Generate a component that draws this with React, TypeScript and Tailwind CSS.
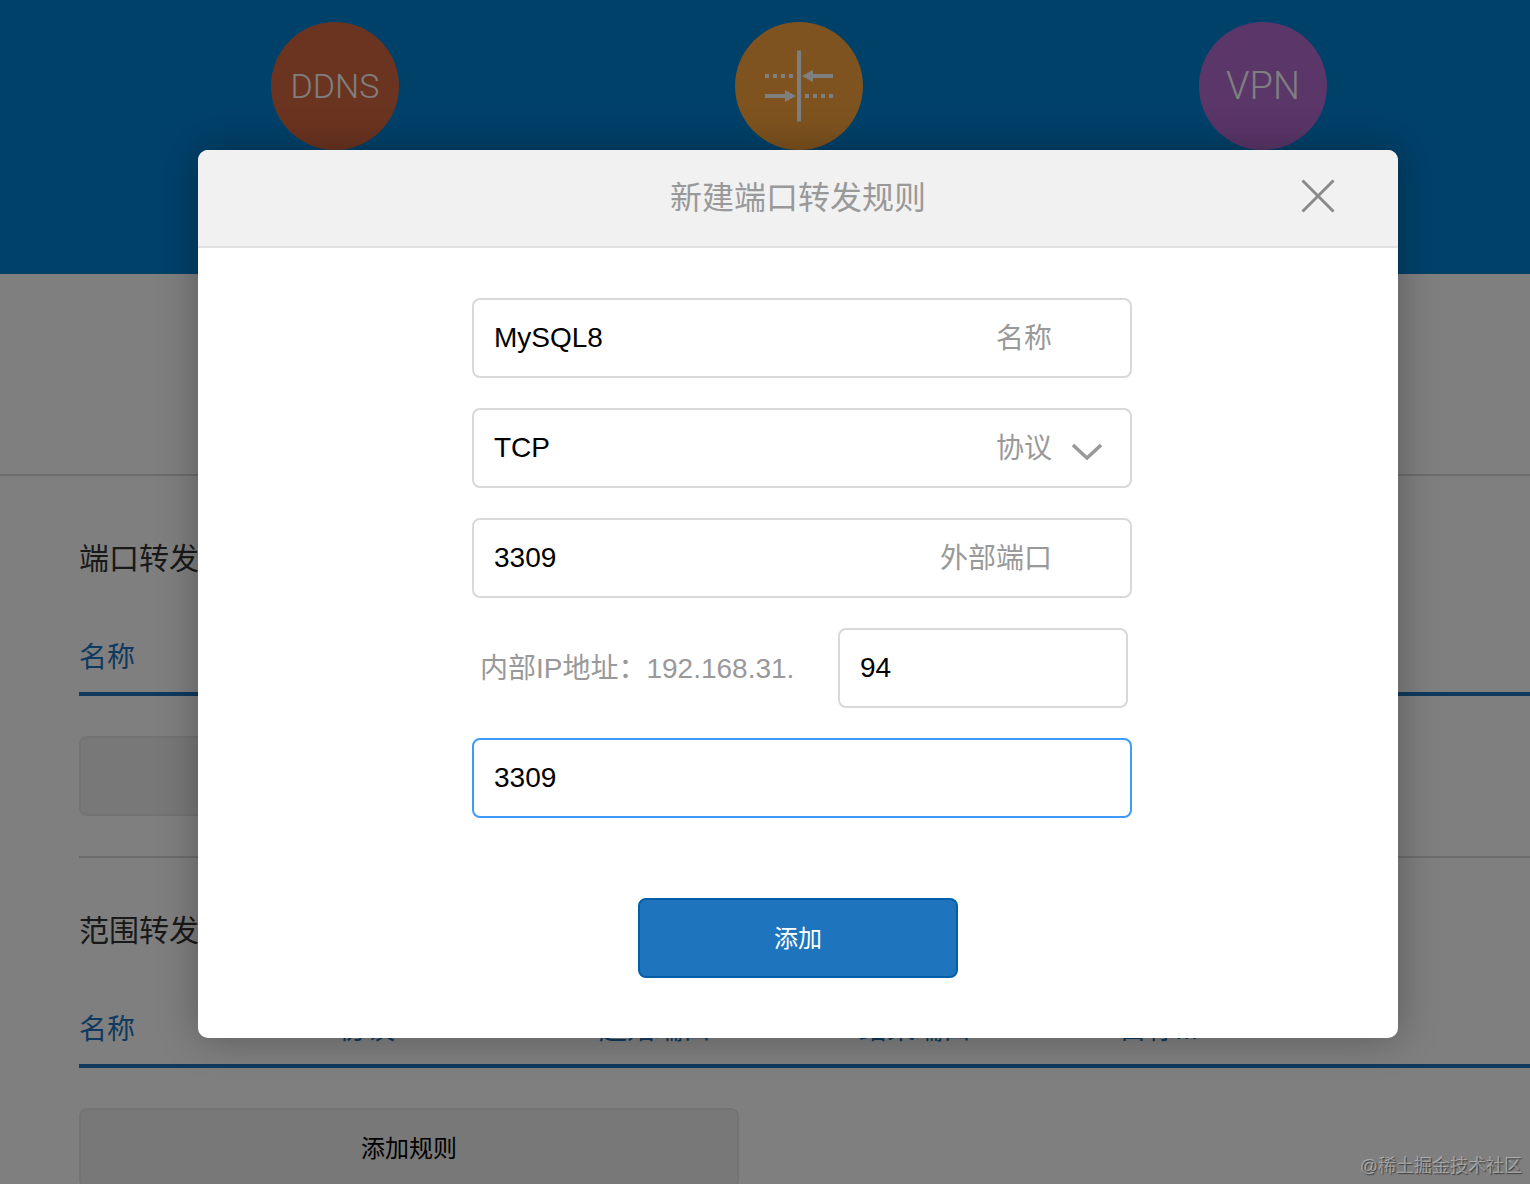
import { useState } from "react";
import type { ReactNode } from "react";

const sections = [
  {
    title: "端口转发规则列表",
    columns: ["名称", "协议"],
  },
  {
    title: "范围转发规则列表",
    columns: ["名称", "协议", "起始端口", "结束端口", "目标..."],
  },
];

const ForwardIcon = () => (
  <svg viewBox="0 0 128 128" className="w-32 h-32" fill="none" stroke="white" aria-hidden="true">
    <path d="M64 28.500V99.500" strokeWidth="4" />
    <path d="M30 54H58" strokeWidth="4" strokeDasharray="4 4" />
    <path d="M70 74H100" strokeWidth="4" strokeDasharray="4 4" />
    <path d="M76 54H98M30 74H52" strokeWidth="4" />
    <path d="M67 54L78 48V60ZM61 74L50 68V80Z" fill="white" stroke="none" />
  </svg>
);

const Badge = ({ className, children }: { className: string; children: ReactNode }) => (
  <div className={`w-32 h-32 shrink-0 rounded-full flex items-center justify-center text-white font-light font-['Roboto',sans-serif] ${className}`}>
    {children}
  </div>
);

type FieldProps = {
  id: string;
  label: string;
  value: string;
  onChange: (value: string) => void;
};

const Field = ({ id, label, value, onChange }: FieldProps) => (
  <div className="flex items-center h-20 rounded-lg border-2 border-[#d9d9d9] bg-white">
    <input
      id={id}
      value={value}
      onChange={(e) => onChange(e.target.value)}
      className="flex-1 min-w-0 h-full px-5 bg-transparent outline-none"
    />
    <label htmlFor={id} className="mr-[78px] pt-0.5 text-[#999]">
      {label}
    </label>
  </div>
);

const App = () => {
  const [name, setName] = useState("MySQL8");
  const [protocol, setProtocol] = useState("TCP");
  const [outerPort, setOuterPort] = useState("3309");
  const [ip, setIp] = useState("94");
  const [innerPort, setInnerPort] = useState("3309");

  return (
    <div className="relative h-screen overflow-hidden bg-white text-black font-['Liberation_Sans','Noto_Sans_CJK_SC',sans-serif]">
      <header className="h-[274px] pt-[22px] pl-[68px] bg-[#0082d4] flex justify-center gap-[336px]">
        <Badge className="bg-[#d66840] text-[34px]">DDNS</Badge>
        <Badge className="bg-[#fca63e]">
          <ForwardIcon />
        </Badge>
        <Badge className="bg-[#b46cd2] text-[38px]">VPN</Badge>
      </header>
      <div className="h-[202px] border-b-2 border-[#d8d8d8]" />

      <main className="pt-[10px] pl-[79px]">
        {sections.map((section) => (
          <section key={section.title} className="pt-[53px] border-b-2 border-[#d8d8d8] pb-10">
            <h2 className="text-[30px] leading-10 text-[#333]">{section.title}</h2>
            <table className="w-full mt-[59px] table-fixed border-separate border-spacing-0">
              <thead>
                <tr>
                  {section.columns.map((column) => (
                    <th
                      key={column}
                      className="w-[260px] pb-[14px] border-b-4 border-[#1e74bd] text-left text-[28px] leading-10 font-normal text-[#1e74bd]"
                    >
                      {column}
                    </th>
                  ))}
                  <td className="border-b-4 border-[#1e74bd]" />
                </tr>
              </thead>
            </table>
            <button
              type="button"
              className="block mt-10 w-[660px] h-20 pt-0.5 rounded-lg border-2 border-[#e6e6e6] bg-[#f1f1f1] text-2xl"
            >
              添加规则
            </button>
          </section>
        ))}
      </main>

      {/* Dialog */}
      <div className="absolute inset-0 bg-black/50 pt-[150px] pl-[66px]">
        <div
          role="dialog"
          aria-labelledby="dialog-title"
          className="mx-auto max-w-[1200px] rounded-[10px] overflow-hidden bg-white shadow-[0_0_40px_rgba(0,0,0,0.3)]"
        >
          <div className="relative h-[98px] flex items-center justify-center bg-[#f1f1f1] border-b-2 border-[#e1e1e1]">
            <h1 id="dialog-title" className="text-[32px] leading-10 text-[#999]">
              新建端口转发规则
            </h1>
            <button type="button" aria-label="关闭" className="absolute right-14 top-6 p-1">
              <svg viewBox="0 0 40 40" className="w-10 h-10" fill="none" stroke="#8a8a8a" strokeWidth="3" aria-hidden="true">
                <path d="M4.500 2.500L35.500 33.500M35.500 2.500L4.500 33.500" />
              </svg>
            </button>
          </div>

          <form onSubmit={(e) => e.preventDefault()} className="pt-[50px] pb-[60px] text-[28px]">
            <div className="pl-2">
              <div className="mx-auto w-[660px] flex flex-col gap-[30px]">
                <Field id="name" label="名称" value={name} onChange={setName} />

                <div className="flex items-center h-20 rounded-lg border-2 border-[#d9d9d9] bg-white">
                  <select
                    id="protocol"
                    value={protocol}
                    onChange={(e) => setProtocol(e.target.value)}
                    className="flex-1 min-w-0 h-full px-5 appearance-none bg-transparent outline-none"
                  >
                    <option>TCP</option>
                    <option>UDP</option>
                  </select>
                  <label htmlFor="protocol" className="mr-5 pt-0.5 text-[#999]">
                    协议
                  </label>
                  <svg viewBox="0 0 30 24" className="w-[30px] h-6 mr-7 pointer-events-none" fill="none" stroke="#999" strokeWidth="3.500" aria-hidden="true">
                    <path d="M1 9L15 22L29 9" />
                  </svg>
                </div>

                <Field id="outer-port" label="外部端口" value={outerPort} onChange={setOuterPort} />

                <div className="flex items-center justify-between pl-2 pr-1">
                  <label htmlFor="ip" className="pt-0.5 text-[#999] whitespace-nowrap">
                    内部IP地址：192.168.31.
                  </label>
                  <input
                    id="ip"
                    value={ip}
                    onChange={(e) => setIp(e.target.value)}
                    className="w-[290px] h-20 px-5 rounded-lg border-2 border-[#d9d9d9] outline-none"
                  />
                </div>

                <input
                  aria-label="内部端口"
                  value={innerPort}
                  onChange={(e) => setInnerPort(e.target.value)}
                  className="h-20 px-5 rounded-lg border-2 border-[#409af7] outline-none"
                />
              </div>
            </div>
            <button
              type="submit"
              className="block mx-auto mt-20 w-80 h-20 pt-0.5 rounded-lg border-2 border-[#005fa8] bg-[#1e74bd] text-2xl text-white"
            >
              添加
            </button>
          </form>
        </div>
      </div>

      <div className="absolute right-2 bottom-1 text-lg text-white/40 [text-shadow:1px_1px_1px_rgba(0,0,0,0.5)]">
        @稀土掘金技术社区
      </div>
    </div>
  );
};

export default App;
